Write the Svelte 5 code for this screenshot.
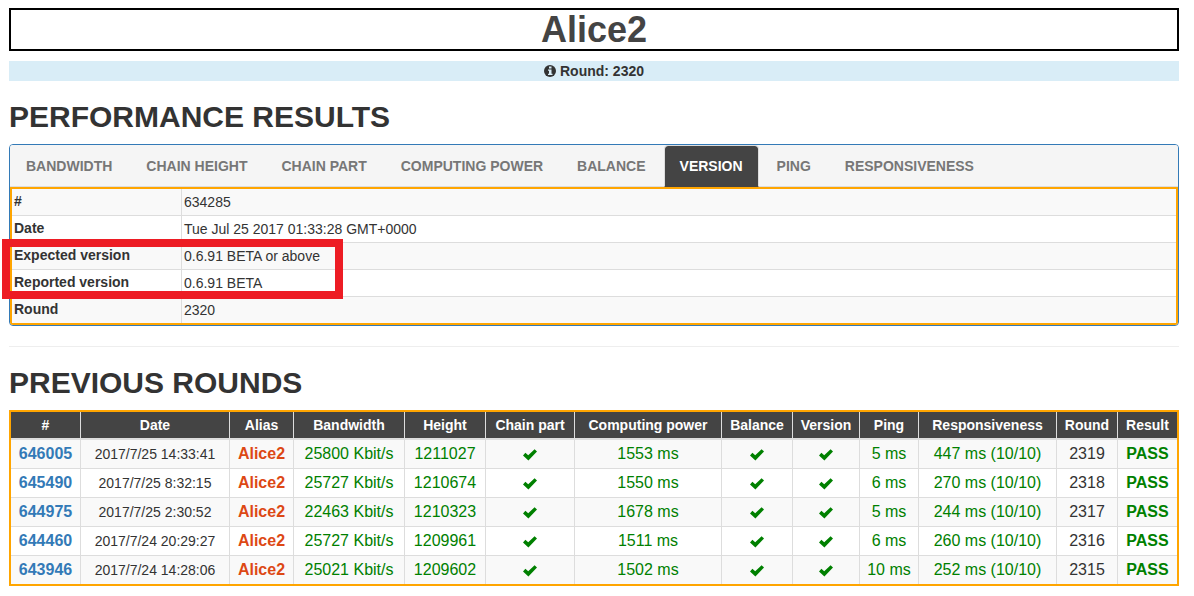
<script>

let active_tab = $state("Version")

const tabs = ["Bandwidth", "Chain height", "Chain part", "Computing power", "Balance", "Version", "Ping", "Responsiveness"]

const details = [
  { label: "#", value: "634285" },
  { label: "Date", value: "Tue Jul 25 2017 01:33:28 GMT+0000" },
  { label: "Expected version", value: "0.6.91 BETA or above" },
  { label: "Reported version", value: "0.6.91 BETA" },
  { label: "Round", value: "2320" }
]

// share = relative column width
const columns = [
  { title: "#", share: 70 },
  { title: "Date", share: 149 },
  { title: "Alias", share: 64 },
  { title: "Bandwidth", share: 111 },
  { title: "Height", share: 81 },
  { title: "Chain part", share: 89 },
  { title: "Computing power", share: 147 },
  { title: "Balance", share: 71 },
  { title: "Version", share: 67 },
  { title: "Ping", share: 59 },
  { title: "Responsiveness", share: 138 },
  { title: "Round", share: 61 },
  { title: "Result", share: 59 }
]
const total_share = columns.reduce((sum, c) => sum + c.share, 0)

const rounds = [
  { id: 646005, date: "2017/7/25 14:33:41", bandwidth: 25800, height: 1211027, power: 1553, ping: 5, resp: 447, round: 2319 },
  { id: 645490, date: "2017/7/25 8:32:15", bandwidth: 25727, height: 1210674, power: 1550, ping: 6, resp: 270, round: 2318 },
  { id: 644975, date: "2017/7/25 2:30:52", bandwidth: 22463, height: 1210323, power: 1678, ping: 5, resp: 244, round: 2317 },
  { id: 644460, date: "2017/7/24 20:29:27", bandwidth: 25727, height: 1209961, power: 1511, ping: 6, resp: 260, round: 2316 },
  { id: 643946, date: "2017/7/24 14:28:06", bandwidth: 25021, height: 1209602, power: 1502, ping: 10, resp: 252, round: 2315 }
]

</script>

{#snippet check()}
  <svg class="check" viewBox="0 0 14 12" role="img" aria-label="passed"><path d="M0 6.4 2.4 3.8 5.2 6.2 11.6 0.2 14 2.6 5.4 11.6Z" /></svg>
{/snippet}

<div class="page">
  <h1>Alice2</h1>

  <div class="round_bar">
    <svg class="info" viewBox="0 0 12 12" aria-hidden="true">
      <circle cx="6" cy="6" r="6" />
      <path d="M5 1.5H7.5V3.5H5ZM4 4.5H7.5V8.8H8.5V10H4V8.8H5V5.7H4Z" />
    </svg>
    Round: 2320
  </div>

  <h2>PERFORMANCE RESULTS</h2>

  <div class="panel">
    <div class="tabs" role="tablist">
      {#each tabs as tab}
        <button role="tab" aria-selected={tab == active_tab} class:active={tab == active_tab} onclick={() => active_tab = tab}>{tab.toUpperCase()}</button>
      {/each}
    </div>
    <table class="details">
      <tbody>
        {#each details as row}
          <tr><th scope="row">{row.label}</th><td>{row.value}</td></tr>
        {/each}
      </tbody>
    </table>
    <div class="marker"></div>
  </div>

  <hr>

  <h2>PREVIOUS ROUNDS</h2>

  <table class="rounds">
    <colgroup>
      {#each columns as col}
        <col style="width: {col.share / total_share * 100}%">
      {/each}
    </colgroup>
    <thead>
      <tr>
        {#each columns as col}
          <th scope="col">{col.title}</th>
        {/each}
      </tr>
    </thead>
    <tbody>
      {#each rounds as r}
        <tr>
          <td><a href="#{r.id}">{r.id}</a></td>
          <td class="date">{r.date}</td>
          <td class="alias">Alice2</td>
          <td class="good">{r.bandwidth} Kbit/s</td>
          <td class="good">{r.height}</td>
          <td class="good">{@render check()}</td>
          <td class="good">{r.power} ms</td>
          <td class="good">{@render check()}</td>
          <td class="good">{@render check()}</td>
          <td class="good">{r.ping} ms</td>
          <td class="good">{r.resp} ms (10/10)</td>
          <td>{r.round}</td>
          <td class="good result">PASS</td>
        </tr>
      {/each}
    </tbody>
  </table>
</div>

<style>

  :global(body) {
    background: #fff;
  }

  .page {
    padding: 8px 15px 10px 9px;
    font-family: "Liberation Sans", Arial, sans-serif;
    font-size: 14px;
    line-height: 20px;
    color: #333;
  }

  h1 {
    margin: 0 0 10px;
    border: 2px solid #000;
    font-size: 36px;
    line-height: 39px;
    text-align: center;
    color: #444;
  }

  .round_bar {
    display: flex;
    justify-content: center;
    align-items: center;
    gap: 4px;
    background: #d9edf7;
    font-weight: bold;
  }

  .info {
    width: 12px;
    height: 12px;
  }

  .info circle {
    fill: #333;
  }

  .info path {
    fill: #d9edf7;
  }

  h2 {
    margin: 20px 0 12px;
    font-size: 30px;
    line-height: 31px;
  }

  .panel {
    position: relative;
    border: 1px solid #337ab7;
    border-radius: 4px;
  }

  .tabs {
    display: flex;
    gap: 2px;
    background: #f5f5f5;
    border-bottom: 1px solid #ddd;
    border-radius: 3px 3px 0 0;
  }

  .tabs button {
    margin: 0 0 -1px;
    padding: 10px 15px;
    border: 1px solid transparent;
    border-radius: 4px 4px 0 0;
    background: none;
    font: inherit;
    font-weight: bold;
    color: #777;
    cursor: pointer;
  }

  .tabs button.active {
    background: #444;
    border-color: #ddd;
    border-bottom-color: #444;
    background-clip: padding-box;
    color: #fff;
  }

  table {
    width: 100%;
    border: 2px solid orange;
    border-spacing: 0;
  }

  tbody tr:nth-child(odd) {
    background: #f9f9f9;
  }

  th, td {
    border-right: 1px solid #ddd;
    border-bottom: 1px solid #ddd;
  }

  th:last-child, td:last-child {
    border-right: 0;
  }

  tbody tr:last-child > * {
    border-bottom: 0;
  }

  .details {
    border-radius: 0 0 3px 3px;
  }

  .details th {
    width: 165px;
    padding: 2px;
    text-align: left;
    vertical-align: top;
  }

  .details td {
    padding: 3px 2px;
  }

  /* frame over the expected / reported version rows */
  .marker {
    position: absolute;
    top: 94px;
    left: -8px;
    width: 325px;
    height: 44px;
    border: 8px solid #ed1c24;
    pointer-events: none;
  }

  hr {
    margin: 20px 0;
    border: 0;
    border-top: 1px solid #eee;
  }

  .rounds {
    table-layout: fixed;
    text-align: center;
    white-space: nowrap;
  }

  .rounds th {
    padding: 3px 0;
    background: #444;
    background-clip: padding-box;
    border-bottom-width: 2px;
    color: #fff;
  }

  .rounds td {
    padding: 3px 0;
    font-size: 16px;
    line-height: 22px;
  }

  .rounds td.date {
    font-size: 14px;
  }

  .rounds a {
    color: #337ab7;
    font-weight: bold;
    text-decoration: none;
  }

  .alias {
    color: #dd4814;
    font-weight: bold;
  }

  .good {
    color: green;
  }

  .result {
    font-weight: bold;
  }

  .check {
    width: 14px;
    height: 12px;
    fill: currentColor;
    vertical-align: middle;
  }

</style>
